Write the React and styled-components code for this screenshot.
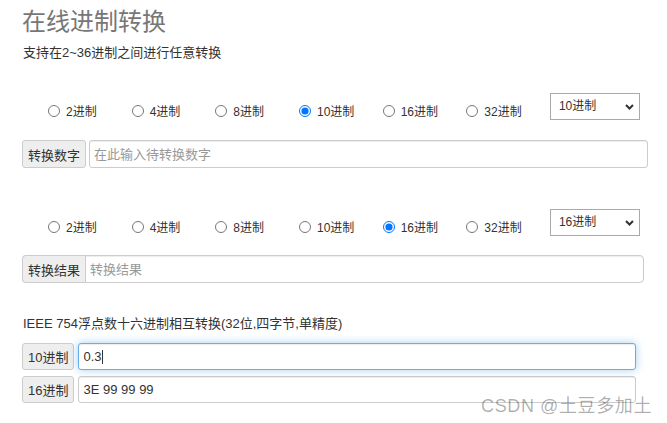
import React from 'react';
import styled, { createGlobalStyle } from 'styled-components';

const GlobalStyle = createGlobalStyle`
  body {
    margin: 0;
    background: #fff;
    font-family: "Liberation Sans", "Noto Sans CJK SC", sans-serif;
    color: #333;
  }
`;

const Page = styled.div`
  position: relative;
  width: 667px;
  height: 423px;
  padding-left: 22px;
  box-sizing: border-box;
  overflow: hidden;
`;

const Title = styled.h1`
  margin: 0;
  padding-top: 5px;
  font-size: 24px;
  line-height: 34px;
  font-weight: normal;
  color: #777;
`;

const Note = styled.p`
  margin: ${(p) => p.$top}px 0 0 1px;
  font-size: 13px;
  line-height: 18px;
  color: #333;
`;

const BaseRow = styled.div`
  display: flex;
  align-items: flex-start;
  height: 27px;
  margin-top: ${(p) => p.$top}px;
`;

const RadioGrid = styled.div`
  display: grid;
  grid-template-columns: repeat(6, 83.67px);
  margin-left: 26px;
  padding-top: 8px;
`;

const Option = styled.label`
  display: flex;
  align-items: center;
  gap: 6px;
  height: 18px;
  font-size: 12px;
  color: #333;
  cursor: pointer;

  input {
    width: 12px;
    height: 12px;
    margin: 1px 0 0;
    accent-color: #0075ff;
  }
`;

const SelectWrap = styled.div`
  position: relative;
  width: 90px;
  height: 27px;
`;

const Select = styled.select`
  appearance: none;
  width: 100%;
  height: 100%;
  margin: 0;
  padding: 0 0 2px 8px;
  border: 1px solid #aaa;
  border-radius: 0;
  background: #fff;
  font-family: inherit;
  font-size: 12px;
  color: #333;
  outline: none;
`;

const Chevron = styled.svg`
  position: absolute;
  right: 6px;
  top: 11px;
  pointer-events: none;
`;

const Group = styled.div`
  display: flex;
  width: ${(p) => p.$width}px;
  height: ${(p) => p.$height || 28}px;
  gap: ${(p) => p.$gap || 0}px;
  margin-top: ${(p) => p.$top}px;
`;

const Addon = styled.span`
  display: flex;
  align-items: center;
  box-sizing: border-box;
  padding: 0 ${(p) => p.$pad || 6}px;
  border: 1px solid #ccc;
  border-radius: ${(p) => (p.$joined ? '4px 0 0 4px' : '3px')};
  ${(p) => p.$joined && 'border-right: 0;'}
  background: #eee;
  font-size: 13px;
  color: #333;
  white-space: nowrap;
`;

const FieldWrap = styled.div`
  position: relative;
  flex: 1;
  display: flex;
`;

const Field = styled.input`
  flex: 1;
  min-width: 0;
  box-sizing: border-box;
  margin: 0;
  padding: 0 4px;
  border: 1px solid ${(p) => (p.$focused ? '#66afe9' : '#ccc')};
  border-radius: ${(p) => (p.$joined ? '0 4px 4px 0' : '3px')};
  background: #fff;
  font-family: inherit;
  font-size: 13px;
  color: #333;
  outline: none;
  box-shadow: ${(p) =>
    p.$focused
      ? 'inset 0 1px 1px rgba(0,0,0,.075), 0 0 8px rgba(102,175,233,.6)'
      : 'inset 0 1px 1px rgba(0,0,0,.075)'};

  &::placeholder {
    color: #999;
  }
`;

const Caret = styled.span`
  position: absolute;
  left: 24px;
  top: 7px;
  width: 1px;
  height: 14px;
  background: #333;
`;

const Watermark = styled.div`
  position: absolute;
  right: 15px;
  top: 391px;
  font-size: 18px;
  letter-spacing: 0.6px;
  color: rgba(0, 0, 0, 0.33);
  pointer-events: none;
`;

const BASES = [2, 4, 8, 10, 16, 32];

const BaseChooser = ({ name, value, top }) => (
  <BaseRow $top={top}>
    <RadioGrid>
      {BASES.map((b) => (
        <Option key={b}>
          <input type="radio" name={name} defaultChecked={b === value} />
          {b}进制
        </Option>
      ))}
    </RadioGrid>
    <SelectWrap>
      <Select defaultValue={value}>
        {Array.from({ length: 35 }, (_, i) => i + 2).map((b) => (
          <option key={b} value={b}>{b}进制</option>
        ))}
      </Select>
      <Chevron width="9" height="6" viewBox="0 0 9 6">
        <path d="M1 1 L4.5 4.5 L8 1" fill="none" stroke="#333" strokeWidth="2" />
      </Chevron>
    </SelectWrap>
  </BaseRow>
);

const App = () => (
  <Page>
    <GlobalStyle />
    <Title>在线进制转换</Title>
    <Note $top={5}>支持在2~36进制之间进行任意转换</Note>

    <BaseChooser name="from" value={10} top={31} />
    <Group $width={626} $gap={3} $top={20}>
      <Addon $pad={5}>转换数字</Addon>
      <Field placeholder="在此输入待转换数字" />
    </Group>

    <BaseChooser name="to" value={16} top={41} />
    <Group $width={622} $top={19}>
      <Addon $joined $pad={5}>转换结果</Addon>
      <Field $joined placeholder="转换结果" readOnly />
    </Group>

    <Note $top={32}>IEEE 754浮点数十六进制相互转换(32位,四字节,单精度)</Note>
    <Group $width={614} $height={27} $gap={4} $top={10}>
      <Addon $pad={5}>10进制</Addon>
      <FieldWrap>
        <Field $focused defaultValue="0.3" />
        <Caret />
      </FieldWrap>
    </Group>
    <Group $width={614} $height={27} $gap={4} $top={6}>
      <Addon $pad={5}>16进制</Addon>
      <Field defaultValue="3E 99 99 99" />
    </Group>

    <Watermark>CSDN @土豆多加土</Watermark>
  </Page>
);

export default App;
